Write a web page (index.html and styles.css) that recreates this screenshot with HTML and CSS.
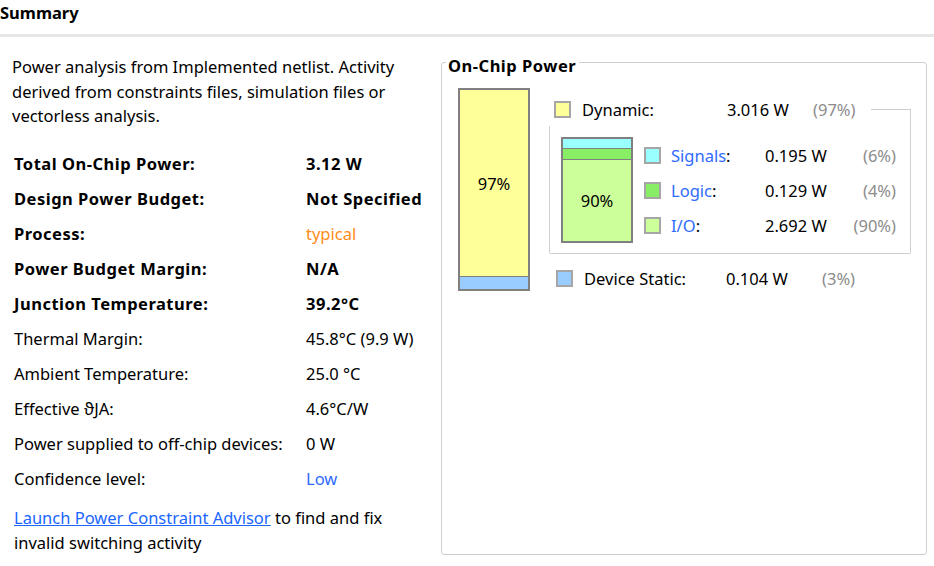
FILE: index.html
```html
<!DOCTYPE html>
<html lang="en">
<head>
<meta charset="utf-8">
<title>Summary</title>
<link rel="stylesheet" href="styles.css">
</head>
<body>
<header class="header"><h1 class="title">Summary</h1></header>
<main class="main">
  <section class="left">
    <p class="intro">Power analysis from Implemented netlist. Activity derived from constraints files, simulation files or vectorless analysis.</p>
    <table class="info">
      <tr class="strong"><td class="lbl">Total On-Chip Power:</td><td class="val">3.12 W</td></tr>
      <tr class="strong"><td class="lbl">Design Power Budget:</td><td class="val">Not Specified</td></tr>
      <tr class="strong"><td class="lbl">Process:</td><td class="val"><span class="orange">typical</span></td></tr>
      <tr class="strong"><td class="lbl">Power Budget Margin:</td><td class="val">N/A</td></tr>
      <tr class="strong"><td class="lbl">Junction Temperature:</td><td class="val">39.2°C</td></tr>
      <tr><td class="lbl">Thermal Margin:</td><td class="val">45.8°C (9.9 W)</td></tr>
      <tr><td class="lbl">Ambient Temperature:</td><td class="val">25.0 °C</td></tr>
      <tr><td class="lbl">Effective ϑJA:</td><td class="val">4.6°C/W</td></tr>
      <tr><td class="lbl">Power supplied to off-chip devices:</td><td class="val">0 W</td></tr>
      <tr><td class="lbl">Confidence level:</td><td class="val"><span class="blue">Low</span></td></tr>
    </table>
    <p class="advisor"><a class="link" href="#">Launch Power Constraint Advisor</a><span> to find and fix invalid switching activity</span></p>
  </section>
  <fieldset class="panel">
    <legend class="legend">On-Chip Power</legend>
    <div class="chart">
      <div class="bar big">
        <div class="seg yellow grow"><span>97%</span></div>
        <div class="seg blueseg s12"></div>
      </div>
      <div class="breakdown">
        <div class="row dyn-row">
          <span class="sw yellow"></span>
          <span class="name w-dyn">Dynamic:</span>
          <span class="num w-dynv">3.016 W</span>
          <span class="pct">(97%)</span>
          <span class="corner"></span>
        </div>
        <div class="group">
          <div class="bar small">
            <div class="seg cyan s9"></div>
            <div class="seg green s10"></div>
            <div class="seg lgreen grow"><span>90%</span></div>
          </div>
          <div class="items">
            <div class="row item"><span class="sw cyan"></span><span class="name w-item"><span class="blue">Signals</span>:</span><span class="num w-itemv">0.195 W</span><span class="pct right">(6%)</span></div>
            <div class="row item"><span class="sw green"></span><span class="name w-item"><span class="blue">Logic</span>:</span><span class="num w-itemv">0.129 W</span><span class="pct right">(4%)</span></div>
            <div class="row item"><span class="sw lgreen"></span><span class="name w-item"><span class="blue">I/O</span>:</span><span class="num w-itemv">2.692 W</span><span class="pct right">(90%)</span></div>
          </div>
        </div>
        <div class="row static-row">
          <span class="sw blueseg"></span>
          <span class="name w-st">Device Static:</span>
          <span class="num w-stv">0.104 W</span>
          <span class="pct">(3%)</span>
        </div>
      </div>
    </div>
  </fieldset>
</main>
</body>
</html>
```
FILE: styles.css
```css
* { box-sizing: border-box; }
body {
  margin: 0;
  background: #fff;
  color: #000;
  font-family: "Noto Sans", "Open Sans", sans-serif;
  font-size: 16.5px;
  width: 934px;
  height: 566px;
  overflow: hidden;
}
.header {
  height: 37px;
  border-bottom: 3px solid #e6e6e6;
  display: flex;
  align-items: center;
}
.title {
  margin: 0 0 10px 0;
  font-size: 16.5px;
  font-weight: 700;
}
.main {
  display: flex;
  padding-top: 18px;
}
.left {
  width: 441px;
  padding-left: 12px;
  flex: none;
}
.intro {
  margin: 0;
  width: 405px;
  line-height: 24.5px;
}
.info {
  border-collapse: collapse;
  margin-top: 17px;
}
.info td {
  height: 35px;
  padding: 0 0 0 2px;
  vertical-align: middle;
  white-space: nowrap;
}
.info .lbl { width: 292px; }
.strong td { font-weight: 700; letter-spacing: 0.5px; }
.orange { color: #ff8c1a; font-weight: 400; letter-spacing: 0; }
.blue { color: #2f6bff; }
.advisor {
  margin: 9px 0 0 2px;
  line-height: 25px;
  width: 405px;
}
.link { color: #1a66ff; text-decoration: underline; }

.panel {
  margin: -8px 0 0 0;
  padding: 0 0 0 16px;
  width: 486px;
  height: 508px;
  border: 1px solid #cfcfcf;
  border-radius: 3px;
  min-width: 0;
}
.legend {
  margin-left: -12px;
  padding: 8px 3px 0 2px;
  font-weight: 700;
  font-size: 16.5px;
  letter-spacing: 0.5px;
  line-height: 22px;
}
.chart {
  display: flex;
  gap: 19px;
  margin-top: 11px;
}
.bar {
  border: 2px solid #808080;
  display: flex;
  flex-direction: column;
  width: 72px;
  flex: none;
}
.big { height: 203px; }
.small { height: 106px; }
.seg { border-top: 1px solid #808080; }
.seg:first-child { border-top: 0; }
.grow {
  flex: 1;
  display: flex;
  align-items: center;
  justify-content: center;
}
.s12 { height: 13px; }
.s9 { height: 9px; }
.s10 { height: 11px; }
.yellow { background: #ffff99; }
.blueseg { background: #99ccff; }
.cyan { background: #99ffff; }
.green { background: #88ee66; }
.lgreen { background: #ccff99; }

.breakdown {
  display: flex;
  flex-direction: column;
  width: 362px;
  margin-top: 4px;
}
.row {
  display: flex;
  align-items: center;
  white-space: nowrap;
}
.sw {
  width: 17px;
  height: 17px;
  border: 2px solid #a6a6a6;
  flex: none;
}
.sw + .name { margin-left: 11px; }
.pct { color: #8c8c8c; }
.right { text-align: right; }
.dyn-row {
  height: 34px;
  padding-left: 5px;
}
.w-dyn { width: 145px; }
.w-dynv { width: 86px; }
.dyn-row .pct { width: 44px; }
.corner {
  align-self: flex-end;
  margin-left: 14px;
  width: 40px;
  height: 17px;
  border-top: 1px solid #cfcfcf;
  border-right: 1px solid #cfcfcf;
}
.group {
  display: flex;
  gap: 11px;
  border: 1px solid #cfcfcf;
  border-top: 0;
  border-radius: 0 0 2px 2px;
  padding: 11px 14px 10px 11px;
  height: 128px;
}
.items {
  display: flex;
  flex-direction: column;
  margin-top: 1px;
}
.item { height: 35px; }
.sw + .w-item { margin-left: 10px; }
.w-item { width: 94px; }
.w-itemv { width: 80px; }
.item .pct { width: 51px; }
.static-row {
  height: 34px;
  margin-top: 7px;
  padding-left: 7px;
}
.w-st { width: 142px; }
.w-stv { width: 96px; }
```
